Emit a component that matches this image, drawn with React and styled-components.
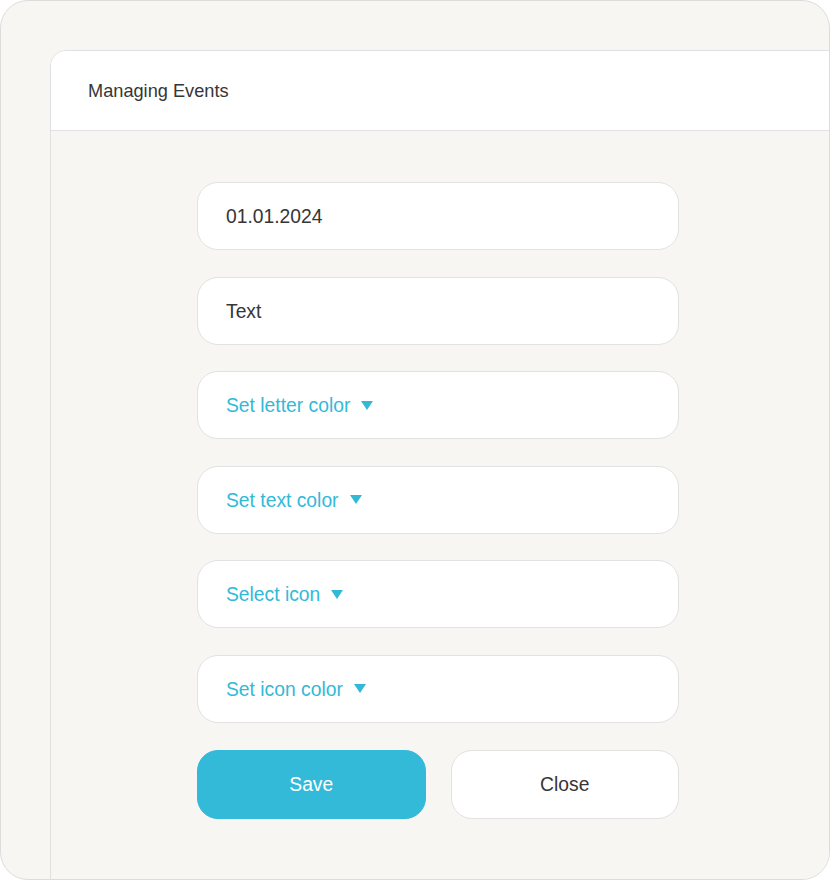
import React from "react";
import styled, { createGlobalStyle } from "styled-components";

const Global = createGlobalStyle`
  html, body { margin: 0; padding: 0; background: #ffffff; }
  * { box-sizing: border-box; }
  body { font-family: "Liberation Sans", Arial, sans-serif; }
`;

const Frame = styled.div`
  width: 830px;
  height: 880px;
  border: 1px solid #dcdcdc;
  border-radius: 28px;
  background: #f7f6f3;
  overflow: hidden;
  padding: 49px 0 0 49px;
`;

const Panel = styled.div`
  width: 820px;
  height: 880px;
  border: 1px solid #e0e0e0;
  border-top-left-radius: 16px;
  background: #f7f6f3;
  display: flex;
  flex-direction: column;
  overflow: hidden;
`;

const Header = styled.div`
  height: 80px;
  background: #ffffff;
  border-bottom: 1px solid #e2e2e2;
  display: flex;
  align-items: center;
  padding: 2px 0 0 37px;
  font-size: 18.2px;
  color: #363636;
`;

const Form = styled.div`
  width: 482px;
  margin: 51px 0 0 146px;
  display: grid;
  row-gap: 26.6px;
`;

const Field = styled.div`
  height: 68px;
  border: 1px solid #e2e2e2;
  border-radius: 21px;
  background: #ffffff;
  display: flex;
  align-items: center;
  padding: 2px 0 0 28px;
  font-size: 19.3px;
  color: ${(p) => (p.$accent ? "#33b9d8" : "#363636")};
`;

const Caret = styled.span`
  display: inline-block;
  width: 0;
  height: 0;
  margin: 0 0 2px 11px;
  border-left: 6px solid transparent;
  border-right: 6px solid transparent;
  border-top: 9px solid #33b9d8;
`;

const Buttons = styled.div`
  display: grid;
  grid-template-columns: 1fr 1fr;
  column-gap: 25px;
`;

const Button = styled.button`
  height: 69px;
  border-radius: 21px;
  font-family: "Liberation Sans", Arial, sans-serif;
  font-size: 19.3px;
  padding-top: 2px;
  cursor: pointer;
  border: 1px solid ${(p) => (p.$primary ? "#33bad8" : "#e2e2e2")};
  background: ${(p) => (p.$primary ? "#33bad8" : "#ffffff")};
  color: ${(p) => (p.$primary ? "#ffffff" : "#363636")};
`;

export default function App() {
  return (
    <>
      <Global />
      <Frame>
        <Panel>
          <Header>Managing Events</Header>
          <Form>
            <Field>01.01.2024</Field>
            <Field>Text</Field>
            <Field $accent>
              Set letter color <Caret />
            </Field>
            <Field $accent>
              Set text color <Caret />
            </Field>
            <Field $accent>
              Select icon <Caret />
            </Field>
            <Field $accent>
              Set icon color <Caret />
            </Field>
            <Buttons>
              <Button $primary>Save</Button>
              <Button>Close</Button>
            </Buttons>
          </Form>
        </Panel>
      </Frame>
    </>
  );
}
